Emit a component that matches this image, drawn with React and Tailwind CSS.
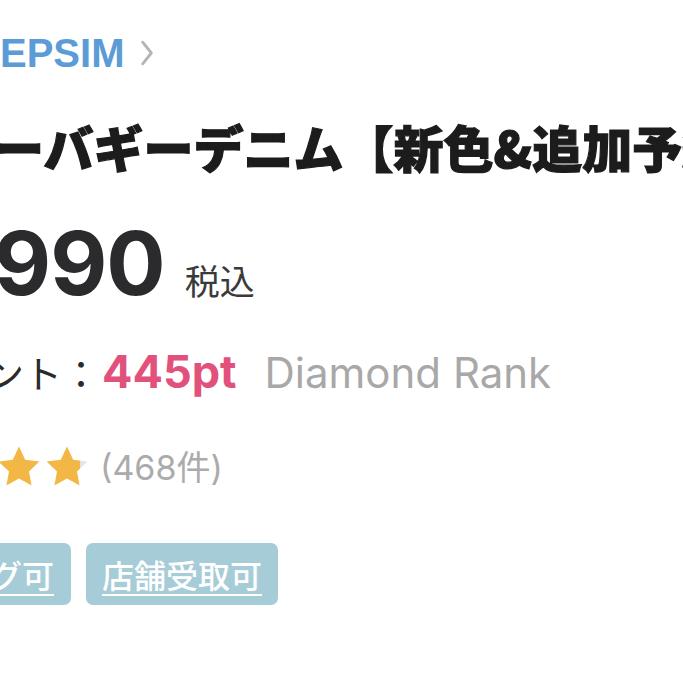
import React from 'react';

const STAR = 'M12 1.8l3.1 6.6 7.1.9-5.2 4.9 1.3 7.1L12 17.8l-6.3 3.5 1.3-7.1L1.8 9.3l7.1-.9z';

function Star({ fill = 1, id }) {
    return (
        <svg viewBox="0 0 24 24" className="w-[48px] h-[48px] shrink-0">
            <defs>
                <linearGradient id={id} x1="0" x2="1" y1="0" y2="0">
                    <stop offset={fill} stopColor="#f3b746" />
                    <stop offset={fill} stopColor="#e4e4e4" />
                </linearGradient>
            </defs>
            <path d={STAR} fill={`url(#${id})`} />
        </svg>
    );
}

function ProductInfo() {
    return (
        <div className="w-[683px] h-[683px] overflow-hidden bg-white font-[family-name:Inter,'Noto_Sans_CJK_JP',sans-serif]">
            {/* brand link */}
            <div className="pt-[29px] flex items-center whitespace-nowrap">
                <span className="text-[40px] leading-[48px] font-bold text-[#5b9bd6] font-[family-name:'Liberation_Sans',Arial,sans-serif]">
                    EPSIM
                </span>
                <svg viewBox="0 0 12 24" className="ml-[16px] w-[14px] h-[26px]">
                    <path d="M2 2l8 10-8 10" fill="none" stroke="#b4b4b4" strokeWidth="2.6" strokeLinecap="round" strokeLinejoin="round" />
                </svg>
            </div>

            {/* product title */}
            <div className="mt-[37px] whitespace-nowrap">
                <h1 className="text-[50px] leading-[64px] font-black text-[#1c1c1c] [-webkit-text-stroke:1.2px_#1c1c1c] -ml-[6px] font-[family-name:'Noto_Sans_CJK_JP',sans-serif]">
                    ーバギーデニム【新色&amp;追加予約
                </h1>
            </div>

            {/* price */}
            <div className="mt-[39px] flex items-baseline whitespace-nowrap">
                <span className="text-[88px] leading-[92px] font-bold text-[#2b2b2e] -ml-[6px] tracking-[-1px]">
                    990
                </span>
                <span className="ml-[20px] text-[35px] text-[#3a3a3a] font-[family-name:'Noto_Sans_CJK_JP',sans-serif]">
                    税込
                </span>
            </div>

            {/* points */}
            <div className="mt-[29px] flex items-baseline whitespace-nowrap -ml-[14px]">
                <span className="text-[38px] text-[#2a2a2a] font-[family-name:'Noto_Sans_CJK_JP',sans-serif]">
                    ント：
                </span>
                <span className="ml-[2px] text-[45px] font-bold text-[#e2517b]">
                    445pt
                </span>
                <span className="ml-[28px] text-[42px] text-[#a8a8a8]">
                    Diamond Rank
                </span>
            </div>

            {/* review */}
            <div className="mt-[36px] flex items-center whitespace-nowrap -ml-[5px]">
                <Star id="s1" fill={1} />
                <Star id="s2" fill={0.82} />
                <span className="ml-[9px] text-[34px] text-[#ababab]">
                    (468件)
                </span>
            </div>

            {/* service tags */}
            <div className="mt-[50px] flex gap-[15px] whitespace-nowrap font-[family-name:'Noto_Sans_CJK_JP',sans-serif]">
                <a className="-ml-[30px] h-[62px] flex items-center pl-[20px] pr-[17px] rounded-[7px] bg-[#a6ccd7] text-white text-[32px] font-medium underline underline-offset-[6px] decoration-[2px]">
                    グ可
                </a>
                <a className="h-[62px] flex items-center px-[16px] rounded-[7px] bg-[#a6ccd7] text-white text-[32px] font-medium underline underline-offset-[6px] decoration-[2px]">
                    店舗受取可
                </a>
            </div>
        </div>
    );
}

export default function App() {
    return <ProductInfo />;
}
